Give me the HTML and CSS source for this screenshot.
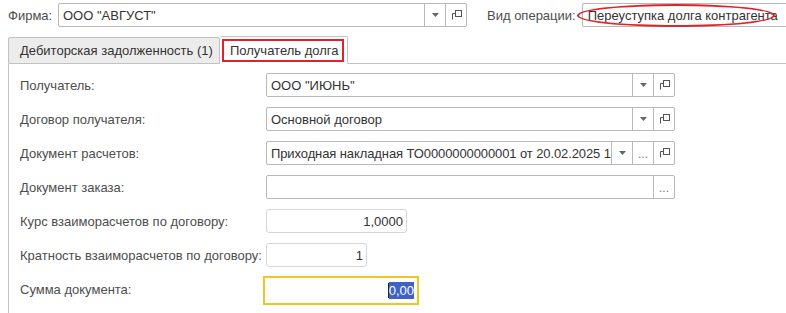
FILE: index.html
```html
<!DOCTYPE html>
<html lang="ru">
<head>
<meta charset="utf-8">
<link rel="stylesheet" href="styles.css">
</head>
<body>
<div class="page">
  <div class="top">
    <span class="tlabel">Фирма:</span>
    <div class="field firm">
      <span class="val">ООО "АВГУСТ"</span>
      <span class="btn dd"><svg width="7" height="4" viewBox="0 0 7 4"><path d="M0 0H7L3.5 4Z" fill="#666"/></svg></span>
      <span class="btn op"><svg width="11" height="11" viewBox="0 0 11 11"><rect x="4.5" y="0.5" width="6" height="6" fill="none" stroke="#555"/><path d="M4.5 3.5H1.5V9.5" fill="none" stroke="#555"/></svg></span>
    </div>
    <span class="tlabel vid">Вид операции:</span>
    <div class="field oper">
      <span class="val">Переуступка долга контрагента</span>
    </div>
    <div class="ellipse"></div>
  </div>

  <div class="tabs">
    <div class="tab">Дебиторская задолженность (1)</div>
    <div class="tab active">Получатель долга</div>
    <div class="tabfill"></div>
    <div class="redbox"></div>
  </div>

  <div class="panel">
    <div class="row">
      <span class="label">Получатель:</span>
      <div class="field w409">
        <span class="val">ООО "ИЮНЬ"</span>
        <span class="btn dd"><svg width="7" height="4" viewBox="0 0 7 4"><path d="M0 0H7L3.5 4Z" fill="#666"/></svg></span>
        <span class="btn op"><svg width="11" height="11" viewBox="0 0 11 11"><rect x="4.5" y="0.5" width="6" height="6" fill="none" stroke="#555"/><path d="M4.5 3.5H1.5V9.5" fill="none" stroke="#555"/></svg></span>
      </div>
    </div>
    <div class="row">
      <span class="label">Договор получателя:</span>
      <div class="field w409">
        <span class="val">Основной договор</span>
        <span class="btn dd"><svg width="7" height="4" viewBox="0 0 7 4"><path d="M0 0H7L3.5 4Z" fill="#666"/></svg></span>
        <span class="btn op"><svg width="11" height="11" viewBox="0 0 11 11"><rect x="4.5" y="0.5" width="6" height="6" fill="none" stroke="#555"/><path d="M4.5 3.5H1.5V9.5" fill="none" stroke="#555"/></svg></span>
      </div>
    </div>
    <div class="row">
      <span class="label">Документ расчетов:</span>
      <div class="field w409">
        <span class="val tight">Приходная накладная ТО0000000000001 от 20.02.2025 1</span>
        <span class="btn dd"><svg width="7" height="4" viewBox="0 0 7 4"><path d="M0 0H7L3.5 4Z" fill="#666"/></svg></span>
        <span class="btn dots">...</span>
        <span class="btn op"><svg width="11" height="11" viewBox="0 0 11 11"><rect x="4.5" y="0.5" width="6" height="6" fill="none" stroke="#555"/><path d="M4.5 3.5H1.5V9.5" fill="none" stroke="#555"/></svg></span>
      </div>
    </div>
    <div class="row">
      <span class="label">Документ заказа:</span>
      <div class="field w409">
        <span class="val"></span>
        <span class="btn dots">...</span>
      </div>
    </div>
    <div class="row">
      <span class="label">Курс взаиморасчетов по договору:</span>
      <div class="field num w141"><span class="val r">1,0000</span></div>
    </div>
    <div class="row">
      <span class="label">Кратность взаиморасчетов по договору:</span>
      <div class="field num w101"><span class="val r">1</span></div>
    </div>
    <div class="row">
      <span class="label">Сумма документа:</span>
      <div class="field sum"><span class="val r"><span class="caret"></span><span class="sel">0,00</span></span></div>
    </div>
  </div>
</div>
</body>
</html>
```

FILE: styles.css
```css
* { box-sizing: border-box; }
html, body { margin: 0; padding: 0; background: #fff; }
body {
  font-family: "Liberation Sans", Arial, sans-serif;
  font-size: 13px;
  color: #4d4d4d;
  width: 786px;
  height: 313px;
  overflow: hidden;
}
.page { position: relative; width: 786px; overflow: hidden; }

.top {
  position: relative;
  display: flex;
  align-items: center;
  height: 24px;
  margin-top: 3px;
  padding-left: 8px;
  white-space: nowrap;
}
.tlabel { width: 50px; flex: none; }
.tlabel.vid { width: auto; margin-left: 20px; margin-right: 6px; }

.field {
  display: flex;
  align-items: stretch;
  flex: none;
  height: 24px;
  border: 1px solid #b9b9b9;
  border-radius: 2px;
  background: #fff;
  color: #333;
}
.field .val {
  flex: 1;
  min-width: 0;
  display: flex;
  align-items: center;
  padding-left: 4px;
  padding-right: 3px;
  white-space: nowrap;
  overflow: hidden;
}
.field .val.tight { padding-right: 0; letter-spacing: -0.1px; }
.field .val.r { justify-content: flex-end; padding-right: 3px; }
.btn {
  width: 21px;
  flex: none;
  display: flex;
  align-items: center;
  justify-content: center;
  border-left: 1px solid #b9b9b9;
}
.btn.dots { color: #777; font-size: 12px; padding-top: 1px; }
.firm { width: 409px; }
.oper { flex: 1; min-width: 0; border-right: none; border-radius: 2px 0 0 2px; }
.oper .val { padding-left: 5px; }

.ellipse {
  position: absolute;
  left: 577px;
  top: 1px;
  width: 198px;
  height: 23px;
  border: 2px solid #e0222c;
  border-radius: 50%;
}

.tabs {
  position: relative;
  display: flex;
  align-items: flex-end;
  margin-top: 8px;
  padding-left: 8px;
  height: 29px;
}
.tab {
  flex: none;
  height: 27px;
  padding: 0 0 0 11px;
  display: flex;
  align-items: center;
  white-space: nowrap;
  border: 1px solid #c2c2c2;
  background: #ececec;
  color: #333;
  border-radius: 2px 2px 0 0;
  width: 212px;
}
.tab.active {
  width: 128px;
  height: 28px;
  background: #fff;
  border-bottom-color: #fff;
  border-left: none;
  padding-left: 10px;
}
.tabfill {
  flex: 1;
  height: 1px;
  background: #c2c2c2;
}
.redbox {
  position: absolute;
  left: 222px;
  top: 4px;
  width: 122px;
  height: 23px;
  border: 2px solid #e0222c;
}

.panel {
  margin-left: 8px;
  border-left: 1px solid #c2c2c2;
  padding: 9px 0 0 11px;
  height: 260px;
  display: flex;
  flex-direction: column;
  gap: 10px;
}
.row {
  display: flex;
  align-items: center;
  height: 24px;
}
.label {
  width: 246px;
  flex: none;
  white-space: nowrap;
}
.w409 { width: 409px; }
.num { border-color: #d6d6d6; border-radius: 3px; }
.w141 { width: 141px; }
.w101 { width: 101px; }
.sum {
  width: 156px;
  height: 29px;
  margin-left: -3px;
  margin-top: 2px;
  border: 2px solid #f3c51e;
  border-radius: 0;
}
.sum .val { padding-right: 3px; }
.sel { background: #3f62c8; color: #fff; padding: 1px 0; }
.caret { width: 1px; height: 15px; background: #222; }
```
